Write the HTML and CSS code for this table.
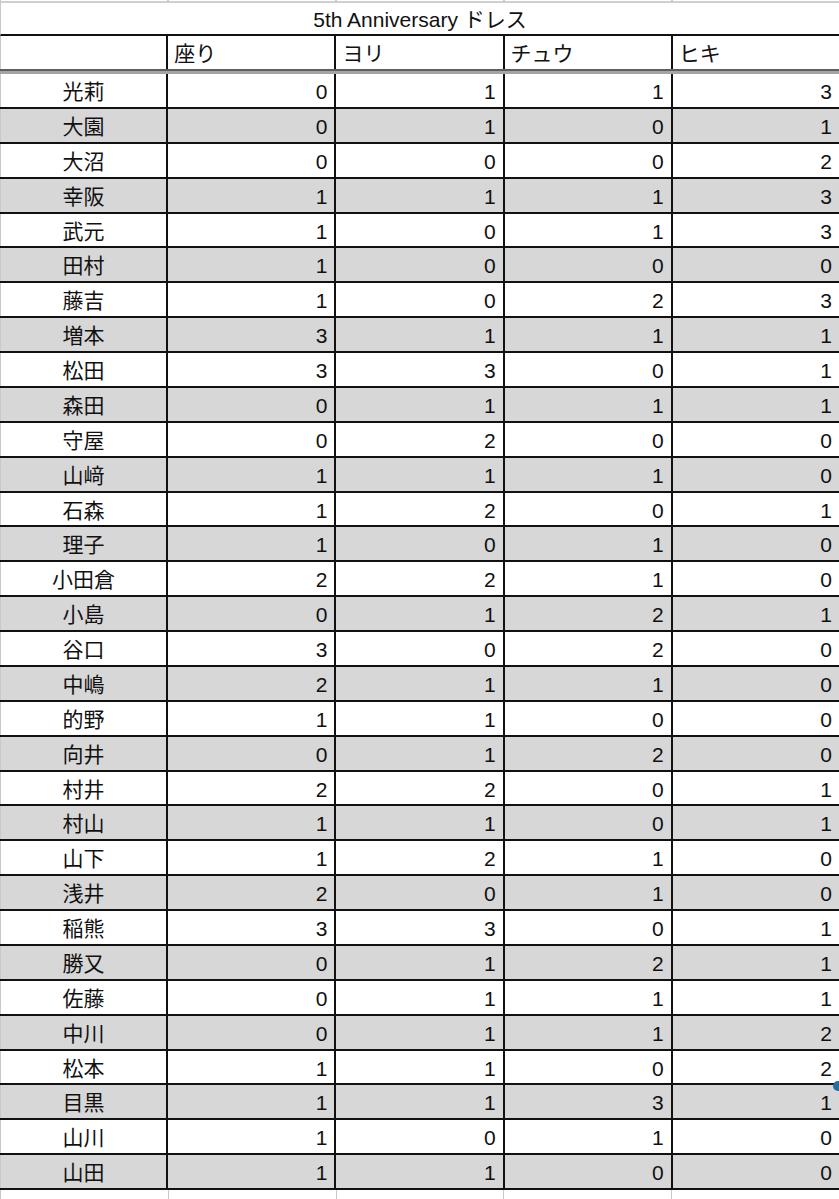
FILE: index.html
```html
<!DOCTYPE html>
<html lang="ja">
<head>
<meta charset="utf-8">
<title>5th Anniversary ドレス</title>
<link rel="stylesheet" href="styles.css">
</head>
<body>
<div class="sheet">
  <div class="strip strip-top"><span></span><span></span><span></span><span></span><span></span></div>
  <div class="title">5th Anniversary ドレス</div>
  <div class="grid head">
    <div class="cell"></div>
    <div class="cell">座り</div>
    <div class="cell">ヨリ</div>
    <div class="cell">チュウ</div>
    <div class="cell">ヒキ</div>
  </div>
  <div class="band"></div>
  <div class="grid body" id="body"></div>
  <div class="strip strip-bottom"><span></span><span></span><span></span><span></span><span></span></div>
  <div class="handle"></div>
</div>
<script>
const data = [
["光莉",0,1,1,3],["大園",0,1,0,1],["大沼",0,0,0,2],["幸阪",1,1,1,3],
["武元",1,0,1,3],["田村",1,0,0,0],["藤吉",1,0,2,3],["増本",3,1,1,1],
["松田",3,3,0,1],["森田",0,1,1,1],["守屋",0,2,0,0],["山﨑",1,1,1,0],
["石森",1,2,0,1],["理子",1,0,1,0],["小田倉",2,2,1,0],["小島",0,1,2,1],
["谷口",3,0,2,0],["中嶋",2,1,1,0],["的野",1,1,0,0],["向井",0,1,2,0],
["村井",2,2,0,1],["村山",1,1,0,1],["山下",1,2,1,0],["浅井",2,0,1,0],
["稲熊",3,3,0,1],["勝又",0,1,2,1],["佐藤",0,1,1,1],["中川",0,1,1,2],
["松本",1,1,0,2],["目黒",1,1,3,1],["山川",1,0,1,0],["山田",1,1,0,0]
];
const body = document.getElementById('body');
data.forEach((row, i) => {
  row.forEach((v, j) => {
    const c = document.createElement('div');
    c.className = 'cell ' + (j === 0 ? 'name' : 'num') + (i % 2 ? ' alt' : '');
    c.textContent = v;
    body.appendChild(c);
  });
});
</script>
</body>
</html>
```
FILE: styles.css
```css
html, body {
  margin: 0;
  padding: 0;
  background: #fff;
}
.sheet {
  position: relative;
  width: 839px;
  height: 1199px;
  overflow: hidden;
  font-family: "Liberation Sans", "Noto Sans CJK JP", sans-serif;
  font-size: 21px;
  color: #111;
}
.strip {
  display: grid;
  grid-template-columns: repeat(5, 1fr);
  column-gap: 2px;
  background: #c9c9c9;
  border-left: 1px solid #c9c9c9;
}
.strip span {
  background: #fff;
}
.strip-top {
  height: 1px;
  border-bottom: 2px solid #cfcfcf;
}
.strip-bottom {
  height: 20px;
  column-gap: 1px;
}
.title {
  height: 31px;
  line-height: 33px;
  text-align: center;
  border-bottom: 2px solid #111;
  border-left: 1px solid #c9c9c9;
  box-sizing: border-box;
  height: 33px;
}
.grid {
  display: grid;
  grid-template-columns: repeat(5, 1fr);
  column-gap: 2px;
  background: #111;
}
.head {
  height: 33px;
}
.head .cell {
  background: #fff;
  line-height: 35px;
  padding-left: 6px;
  overflow: hidden;
}
.head .cell:first-child {
  border-left: 1px solid #c9c9c9;
}
.band {
  height: 2px;
  background: #5f5f5f;
  border-bottom: 3px solid #a4a4a4;
}
.body {
  row-gap: 2px;
  grid-auto-rows: 32.875px;
  border-bottom: 2px solid #111;
}
.body .cell {
  background: #fff;
  line-height: 35px;
  overflow: hidden;
}
.body .cell.alt {
  background: #d7d7d7;
}
.name {
  text-align: center;
  border-left: 1px solid #c9c9c9;
}
.num {
  text-align: right;
  padding-right: 7px;
}
.handle {
  position: absolute;
  left: 833px;
  top: 1081px;
  width: 10px;
  height: 10px;
  border-radius: 50%;
  background: #23709f;
}
```
